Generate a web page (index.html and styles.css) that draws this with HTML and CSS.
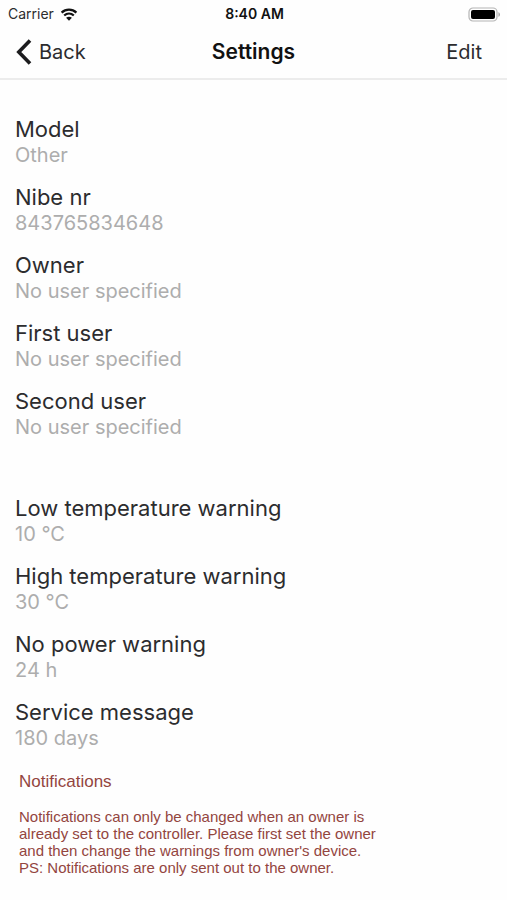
FILE: index.html
```html
<!DOCTYPE html>
<html lang="en">
<head>
<meta charset="utf-8">
<meta name="viewport" content="width=device-width, initial-scale=1">
<title>Settings</title>
<link rel="stylesheet" href="styles.css">
</head>
<body>
<div class="status">
  <div class="carrier">
    <span>Carrier</span>
    <svg class="wifi" viewBox="0 0 18 13" aria-hidden="true">
      <path d="M1.6 4.6C5.8.7 12.2.7 16.4 4.6M4.2 7.5c2.8-2.5 6.8-2.5 9.6 0" fill="none" stroke="#111" stroke-width="2.3"/>
      <path d="M6.1 9.8c1.7-1.4 4.1-1.4 5.8 0L9 12.7z" fill="#111"/>
    </svg>
  </div>
  <span class="time">8:40 AM</span>
  <svg class="battery" viewBox="0 0 33 15" aria-hidden="true">
    <rect x="1" y="1" width="28" height="13" rx="4" fill="#fff" stroke="#b4b4b4" stroke-width="1.2"/>
    <rect x="3" y="3" width="24" height="9" rx="2" fill="#000"/>
    <path d="M30.5 5.2c1.8.6 1.8 4 0 4.6z" fill="#999"/>
  </svg>
</div>
<header class="nav">
  <button class="nav-btn back" type="button">
    <svg class="chevron" viewBox="0 0 16 26" aria-hidden="true"><path d="M14 1.5 2.8 13 14 24.5" fill="none" stroke="#1c1c1e" stroke-width="3.6"/></svg>
    <span>Back</span>
  </button>
  <h1>Settings</h1>
  <button class="nav-btn edit" type="button">Edit</button>
</header>
<main>
  <dl class="group">
    <div><dt>Model</dt><dd>Other</dd></div>
    <div><dt>Nibe nr</dt><dd>843765834648</dd></div>
    <div><dt>Owner</dt><dd>No user specified</dd></div>
    <div><dt>First user</dt><dd>No user specified</dd></div>
    <div><dt>Second user</dt><dd>No user specified</dd></div>
  </dl>
  <dl class="group">
    <div><dt>Low temperature warning</dt><dd>10 °C</dd></div>
    <div><dt>High temperature warning</dt><dd>30 °C</dd></div>
    <div><dt>No power warning</dt><dd>24 h</dd></div>
    <div><dt>Service message</dt><dd>180 days</dd></div>
  </dl>
  <section class="notice">
    <h2>Notifications</h2>
    <p>Notifications can only be changed when an owner is<br>already set to the controller. Please first set the owner<br>and then change the warnings from owner's device.<br>PS: Notifications are only sent out to the owner.</p>
  </section>
</main>
</body>
</html>
```
FILE: styles.css
```css
* {
  box-sizing: border-box;
}

body {
  margin: 0;
  background: #fefefe;
  color: #2c2c2e;
  font-family: Inter, "Liberation Sans", sans-serif;
}

h1, h2, p, dl, dd {
  margin: 0;
}

.status, .nav {
  display: grid;
  grid-template-columns: 1fr auto 1fr;
  align-items: center;
}

.status {
  height: 28px;
  padding: 0 6px 0 8px;
  font-size: 14px;
  line-height: 20px;
}

.carrier {
  display: flex;
  align-items: center;
  gap: 6px;
}

.wifi {
  width: 18px;
  height: 13px;
}

.time {
  color: #111;
  font-weight: 600;
}

.battery {
  width: 33px;
  height: 15px;
  justify-self: end;
}

.nav {
  height: 52px;
  padding: 0 16px 2px;
  border-bottom: 2px solid #ececec;
}

.nav h1 {
  color: #111;
  font-size: 21px;
  line-height: 26px;
  font-weight: 600;
}

.nav-btn {
  display: flex;
  align-items: center;
  gap: 7px;
  padding: 0;
  border: 0;
  background: none;
  color: inherit;
  font: inherit;
  font-size: 20px;
  line-height: 26px;
}

.back {
  justify-self: start;
}

.edit {
  justify-self: end;
  padding-right: 9px;
}

.chevron {
  width: 16px;
  height: 26px;
}

main {
  padding: 36px 15px 24px;
}

.group {
  display: flex;
  flex-direction: column;
  gap: 15px;
  margin-bottom: 54px;
}

.group + .group {
  margin-bottom: 20px;
}

dt {
  font-size: 22px;
  line-height: 26px;
}

dd {
  color: #adadad;
  font-size: 20px;
  line-height: 27px;
}

.notice {
  padding-left: 4px;
  color: #93453f;
  font-family: "Liberation Sans", sans-serif;
}

.notice h2 {
  margin-bottom: 16px;
  font-size: 17px;
  line-height: 20px;
  font-weight: 400;
}

.notice p {
  font-size: 15px;
  line-height: 17px;
}
```
